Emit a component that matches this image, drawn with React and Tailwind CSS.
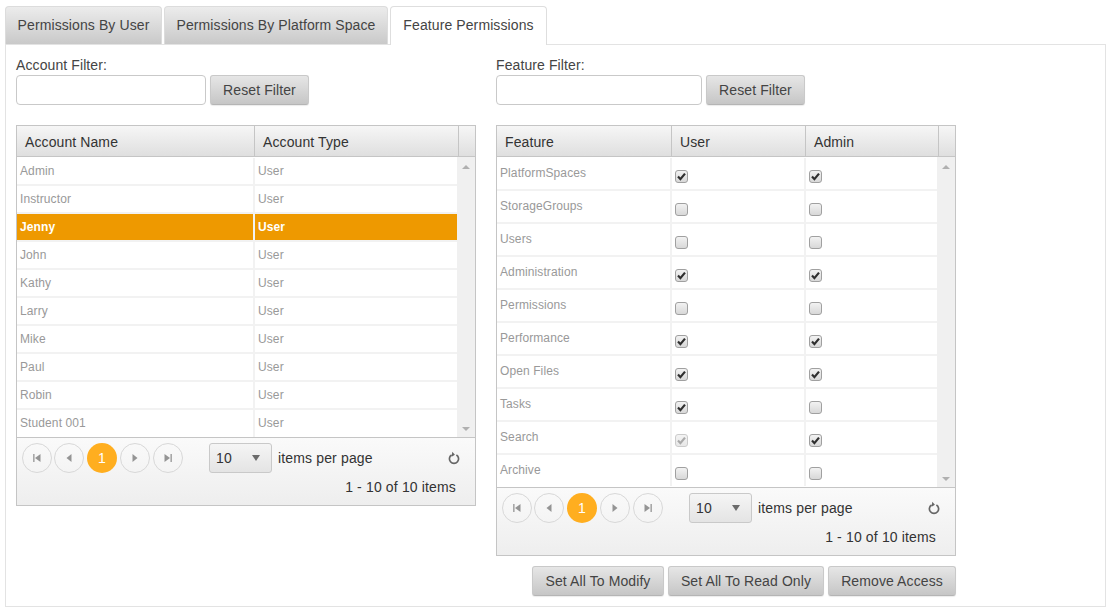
import React from "react";

const accounts = ["Admin", "Instructor", "Jenny", "John", "Kathy", "Larry", "Mike", "Paul", "Robin", "Student 001"];

const features = [
    { name: "PlatformSpaces", user: true, admin: true },
    { name: "StorageGroups", user: false, admin: false },
    { name: "Users", user: false, admin: false },
    { name: "Administration", user: true, admin: true },
    { name: "Permissions", user: false, admin: false },
    { name: "Performance", user: true, admin: true },
    { name: "Open Files", user: true, admin: true },
    { name: "Tasks", user: true, admin: false },
    { name: "Search", user: true, admin: true, userDisabled: true },
    { name: "Archive", user: false, admin: false },
];

const GrayButton = ({ className = "", children }) => (
    <button className={`h-[30px] rounded-[3px] border border-[#c9c9c9] border-b-[#b5b5b5] bg-gradient-to-b from-[#e6e6e6] to-[#c6c6c6] text-sm text-[#444] shadow-[0_1px_1px_rgba(0,0,0,0.08)] ${className}`}>
        {children}
    </button>
);

const Check = ({ checked, disabled }) => (
    <span
        className={`flex h-[13px] w-[13px] items-center justify-center rounded-[3px] border bg-gradient-to-b ${
            disabled ? "border-[#ccc] from-[#f3f3f3] to-[#e8e8e8]" : "border-[#a0a0a0] from-[#f2f2f2] to-[#d8d8d8]"
        }`}
    >
        {checked && (
            <svg viewBox="0 0 11 11" className="h-[11px] w-[11px]">
                <path
                    d="M2 5.6 4.4 8.2 9 2.6"
                    fill="none"
                    stroke={disabled ? "#aaa" : "#2f2f2f"}
                    strokeWidth="2.2"
                />
            </svg>
        )}
    </span>
);

const PageButton = ({ d }) => (
    <span className="flex h-[30px] w-[30px] items-center justify-center rounded-full border border-[#d8d8d8]">
        <svg viewBox="0 0 10 10" className="h-[10px] w-[10px]" fill="#949494">
            <path d={d} />
        </svg>
    </span>
);

const Pager = () => (
    <div className="h-[68px] border-t border-[#c5c5c5] bg-gradient-to-b from-[#fafafa] to-[#eeeeee] pt-[5px] pl-[5px] pr-[19px] text-sm tracking-[0.15px] text-[#333]">
        <div className="flex items-center">
            <div className="flex items-center">
                <PageButton d="M1.2 1h1.3v8H1.2zM8.5 1v8L3 5z" />
                <span className="w-[2px]" />
                <PageButton d="M7.5 1v8L2.5 5z" />
                <span className="w-[3px]" />
                <span className="flex h-[30px] w-[30px] items-center justify-center rounded-full bg-[#ffae1f] text-sm text-white">1</span>
                <span className="w-[3px]" />
                <PageButton d="M2.5 1v8L7.5 5z" />
                <span className="w-[3px]" />
                <PageButton d="M1.5 1v8L7 5zM7.5 1h1.3v8H7.5z" />
            </div>
            <div className="ml-[26px] flex h-[30px] w-[63px] items-center justify-between rounded-[3px] border border-[#c9c9c9] bg-gradient-to-b from-[#f5f5f5] to-[#e4e4e4] pl-[6px] pr-[11px]">
                <span>10</span>
                <svg viewBox="0 0 8 6" className="h-[6px] w-[8px]" fill="#6b6b6b">
                    <path d="M0 0h8L4 6z" />
                </svg>
            </div>
            <span className="ml-[6px]">items per page</span>
            <svg viewBox="0 0 14 14" className="ml-auto mr-[-5px] h-[14px] w-[14px]" fill="none">
                <path d="M4.6 3.9a4.6 4.6 0 1 0 4.8 0" stroke="#666" strokeWidth="1.7" />
                <path d="M5 .8v5L8 3.3z" fill="#666" transform="rotate(8 5 3)" />
            </svg>
        </div>
        <div className="mt-[4px] text-right leading-[20px]">1 - 10 of 10 items</div>
    </div>
);

const ScrollArrows = () => (
    <div className="flex flex-col items-center justify-between bg-[#f0f0f0] pt-[8px] pb-[6px]">
        <svg viewBox="0 0 8 4" className="h-[4px] w-[8px]" fill="#b0b0b0">
            <path d="M4 0l4 4H0z" />
        </svg>
        <svg viewBox="0 0 8 4" className="h-[4px] w-[8px]" fill="#b0b0b0">
            <path d="M0 0h8L4 4z" />
        </svg>
    </div>
);

const HeaderCell = ({ className = "", children }) => (
    <div className={`flex h-[30px] items-center border-r border-[#c5c5c5] pt-[2px] text-sm text-[#333] ${className}`}>
        {children}
    </div>
);

const App = () => {
    return (
        <div className="h-[611px] w-[1113px] overflow-hidden bg-white pt-[6px] pl-[5px] font-['Liberation_Sans',Arial,sans-serif] tracking-[0.1px]">
            {/* tab strip */}
            <div className="relative z-10 flex h-[38px] gap-[2px] text-sm">
                <div className="flex w-[157px] items-center justify-center rounded-t-[4px] border border-b-0 border-[#dcdcdc] bg-gradient-to-b from-[#ececec] to-[#c9c9c9] pb-[2px] text-[#444]">
                    Permissions By User
                </div>
                <div className="flex w-[224px] items-center justify-center rounded-t-[4px] border border-b-0 border-[#dcdcdc] bg-gradient-to-b from-[#ececec] to-[#c9c9c9] pb-[2px] text-[#444]">
                    Permissions By Platform Space
                </div>
                <div className="flex h-[39px] w-[157px] items-center justify-center rounded-t-[4px] border border-b-0 border-[#dedede] bg-white pb-[2px] text-[#444]">
                    Feature Permissions
                </div>
            </div>

            <div className="flex h-[563px] w-[1101px] gap-[20px] border border-[#e3e3e3] px-[10px] pt-[12px]">
                {/* accounts */}
                <div className="w-[460px]">
                    <div className="h-[18px] text-sm leading-[16px] text-[#444]">Account Filter:</div>
                    <div className="flex h-[30px] gap-[4px]">
                        <input className="h-[30px] w-[190px] rounded-[4px] border border-[#c9c9c9] bg-white" />
                        <GrayButton className="w-[99px]">Reset Filter</GrayButton>
                    </div>
                    <div className="mt-[20px] border border-[#c5c5c5]">
                        <div className="grid grid-cols-[238px_204px_16px] border-b border-[#c5c5c5] bg-gradient-to-b from-[#f6f6f6] to-[#dfdfdf]">
                            <HeaderCell className="pl-[8px]">Account Name</HeaderCell>
                            <HeaderCell className="pl-[8px]">Account Type</HeaderCell>
                            <div />
                        </div>
                        <div className="grid grid-cols-[440px_18px]">
                            <div className="bg-white pt-[1px]">
                                {accounts.map((a) => {
                                    const selected = a === "Jenny";
                                    return (
                                        <div
                                            key={a}
                                            className={`grid h-[28px] grid-cols-[238px_202px] border-b-2 border-[#f2f2f2] text-xs leading-[26px] last:h-[27px] last:border-b-0 ${
                                                selected ? "bg-[#ee9900] font-bold text-white" : "bg-white text-[#999]"
                                            }`}
                                        >
                                            <div className="border-r-2 border-[#f2f2f2] pl-[3px]">{a}</div>
                                            <div className="pl-[3px]">User</div>
                                        </div>
                                    );
                                })}
                            </div>
                            <ScrollArrows />
                        </div>
                        <Pager />
                    </div>
                </div>

                {/* features */}
                <div className="w-[460px]">
                    <div className="h-[18px] text-sm leading-[16px] text-[#444]">Feature Filter:</div>
                    <div className="flex h-[30px] gap-[4px]">
                        <input className="h-[30px] w-[206px] rounded-[4px] border border-[#c9c9c9] bg-white" />
                        <GrayButton className="w-[99px]">Reset Filter</GrayButton>
                    </div>
                    <div className="mt-[20px] border border-[#c5c5c5]">
                        <div className="grid grid-cols-[175px_134px_133px_16px] border-b border-[#c5c5c5] bg-gradient-to-b from-[#f6f6f6] to-[#dfdfdf]">
                            <HeaderCell className="pl-[8px]">Feature</HeaderCell>
                            <HeaderCell className="pl-[8px]">User</HeaderCell>
                            <HeaderCell className="pl-[8px]">Admin</HeaderCell>
                            <div />
                        </div>
                        <div className="grid grid-cols-[440px_18px]">
                            <div className="bg-white pt-[1px]">
                                {features.map((f) => (
                                    <div
                                        key={f.name}
                                        className="grid h-[33px] grid-cols-[175px_134px_131px] border-b-2 border-[#f2f2f2] bg-white text-xs text-[#999] last:h-[32px] last:border-b-0"
                                    >
                                        <div className="h-[31px] border-r-2 border-[#f2f2f2] pl-[3px] pt-[8px] leading-[14px]">{f.name}</div>
                                        <div className="flex h-[31px] items-center border-r-2 border-[#f2f2f2] pl-[3px] pt-[6px]">
                                            <Check checked={f.user} disabled={f.userDisabled} />
                                        </div>
                                        <div className="flex h-[31px] items-center pl-[3px] pt-[6px]">
                                            <Check checked={f.admin} />
                                        </div>
                                    </div>
                                ))}
                            </div>
                            <ScrollArrows />
                        </div>
                        <Pager />
                    </div>
                    <div className="mt-[10px] flex justify-end gap-[4px]">
                        <GrayButton className="w-[132px]">Set All To Modify</GrayButton>
                        <GrayButton className="w-[156px]">Set All To Read Only</GrayButton>
                        <GrayButton className="w-[128px]">Remove Access</GrayButton>
                    </div>
                </div>
            </div>
        </div>
    );
};

export default App;
